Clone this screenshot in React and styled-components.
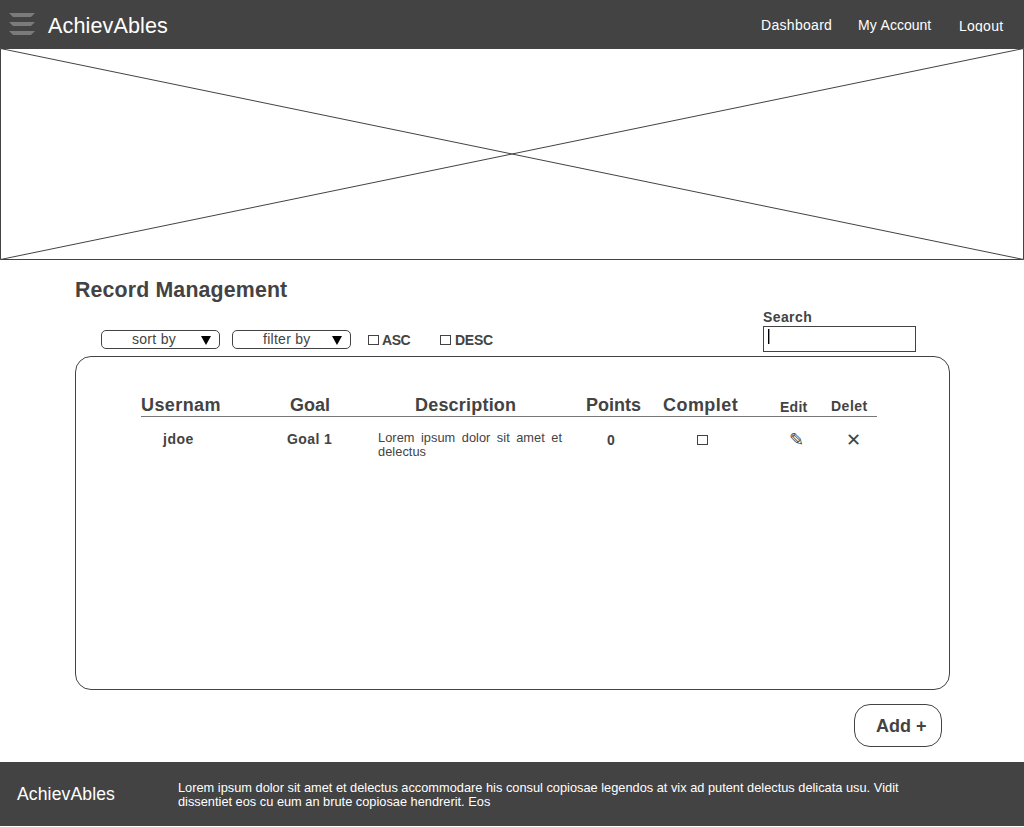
import React from "react";
import styled, { createGlobalStyle } from "styled-components";

const INK = "#434343";

const Global = createGlobalStyle`
  * { box-sizing: border-box; }
  body { margin: 0; background: #fff; overflow: hidden; }
`;

const Page = styled.div`
  width: 1024px;
  height: 827px;
  display: flex;
  flex-direction: column;
  background: #fff;
  color: ${INK};
  font-family: "Liberation Sans", Arial, sans-serif;
  font-kerning: none;
`;

const Label = styled.span`
  display: block;
  margin: 0;
  white-space: nowrap;
  font-size: ${(p) => p.$size || 14}px;
  font-weight: ${(p) => (p.$bold ? 700 : 400)};
  letter-spacing: ${(p) => p.$track || 0}px;
  line-height: ${(p) => p.$line || 16}px;
`;

const Header = styled.header`
  height: 48px;
  flex: none;
  display: flex;
  align-items: flex-start;
  background: ${INK};
  color: #fff;
  padding: 13px 0 0 9px;
`;

const MenuIcon = styled.svg`
  display: block;
  margin-right: 13px;
`;

const Nav = styled.nav`
  display: flex;
  align-items: flex-start;
  margin-left: auto;
  padding-top: 4px;
`;

const NavItem = styled(Label).attrs({ as: "a" })`
  width: ${(p) => p.$width}px;
  margin-top: ${(p) => p.$drop || 0}px;
  height: ${(p) => p.$height || 18}px;
  overflow: hidden;
`;

const Banner = styled.svg`
  display: block;
  flex: none;
`;

const Main = styled.main`
  flex: none;
  height: 502px;
  padding: 18px 74px 0 75px;
  display: flex;
  flex-direction: column;
`;

const Toolbar = styled.div`
  display: flex;
  flex: none;
  align-items: flex-start;
  height: 52px;
  margin-top: 2px;
  padding: 4px 34px 0 26px;
`;

const Select = styled.div`
  width: 119px;
  height: 19px;
  margin: 22px 12px 0 0;
  padding: 0 8px 0 30px;
  border: 1px solid ${INK};
  border-radius: 5px;
  display: flex;
  align-items: flex-start;
  justify-content: space-between;
`;

const Arrow = styled.svg`
  display: block;
  margin-top: 5px;
`;

const CheckOption = styled.label`
  display: flex;
  align-items: center;
  gap: ${(p) => p.$gap}px;
  width: ${(p) => p.$width}px;
  margin: 24px 0 0 ${(p) => p.$left || 0}px;
`;

const Box = styled.span`
  display: block;
  flex: none;
  width: 11px;
  height: 10px;
  border: 1px solid ${INK};
`;

const Search = styled.div`
  width: 153px;
  margin-left: auto;
  margin-top: 1px;
`;

const SearchField = styled.div`
  height: 26px;
  margin-top: 1px;
  border: 1px solid ${INK};
  padding: 2px 4px;
`;

const Caret = styled.span`
  display: block;
  width: 2px;
  height: 15px;
  background: linear-gradient(90deg, #000 50%, #999 50%);
`;

const Panel = styled.section`
  flex: none;
  height: 334px;
  width: 875px;
  border: 1px solid ${INK};
  border-radius: 16px;
  padding: 35px 72px 0 65px;
`;

const TableRow = styled.div`
  display: grid;
  grid-template-columns: 146px 91px 208px 77px 117px 51px 46px;
  height: ${(p) => (p.$head ? 25 : 50)}px;
  border-bottom: ${(p) => (p.$head ? "1px solid #777" : "0")};
  padding-top: ${(p) => (p.$head ? 3 : 13)}px;
`;

const Cell = styled.div`
  min-width: 0;
  padding-left: ${(p) => p.$left || 0}px;
  padding-top: ${(p) => p.$top || 0}px;
`;

const Description = styled.p`
  margin: 0;
  width: 184px;
  font-size: 12.8px;
  line-height: 14px;
  letter-spacing: 0.05px;
  text-align: justify;
`;

const Glyph = styled.span`
  display: block;
  font-family: "DejaVu Sans", sans-serif;
  font-size: ${(p) => p.$size}px;
  line-height: 19px;
`;

const AddButton = styled.button`
  align-self: flex-end;
  flex: none;
  width: 88px;
  height: 43px;
  margin: 14px 8px 0 0;
  padding: 0 0 0 21px;
  border: 1px solid ${INK};
  border-radius: 16px;
  background: #fff;
  color: inherit;
  font-family: inherit;
  text-align: left;
`;

const Footer = styled.footer`
  height: 64px;
  flex: none;
  display: flex;
  align-items: flex-start;
  background: ${INK};
  color: #fff;
  padding: 19px 0 0 17px;
`;

const FooterBrand = styled(Label)`
  width: 161px;
  padding-top: 3px;
`;

const Dropdown = ({ children }) => (
  <Select>
    <Label $track={0.28}>{children}</Label>
    <Arrow width="10" height="9" viewBox="0 0 10 9">
      <path d="M0 0H10L5 9Z" fill="#000" />
    </Arrow>
  </Select>
);

const heads = [
  { text: "Usernam", size: 18, track: 0.4 },
  { text: "Goal", size: 18, left: 3, track: 0 },
  { text: "Description", size: 18, left: 37, track: 0.2 },
  { text: "Points", size: 18, track: 0 },
  { text: "Complet", size: 18, track: 0.45 },
  { text: "Edit", track: 0.25, top: 2 },
  { text: "Delet", track: 0.5, top: 1 },
];

export default function App() {
  return (
    <Page>
      <Global />
      <Header>
        <MenuIcon width="26" height="22" viewBox="0 0 26 22">
          {[0, 9, 18].map((y) => (
            <path key={y} d={`M0 ${y}H26L22 ${y + 4}H4Z`} fill="#7b7b7b" />
          ))}
        </MenuIcon>
        <Label $size={21.6} $track={0.1} $line={25}>AchievAbles</Label>
        <Nav>
          <NavItem $width={97} $track={0.3}>Dashboard</NavItem>
          <NavItem $width={101}>My Account</NavItem>
          <NavItem $width={65} $track={0.25} $drop={1} $height={14}>Logout</NavItem>
        </Nav>
      </Header>
      <Banner width="1024" height="212" viewBox="0 0 1024 212">
        <path d="M.5 .5H1023.5V211.5H.5ZL1023.5 211.5M1023.5 .5L.5 211.5" fill="none" stroke={INK} />
      </Banner>
      <Main>
        <Label as="h1" $size={21.33} $bold $track={0.15} $line={24}>Record Management</Label>
        <Toolbar>
          <Dropdown>sort by</Dropdown>
          <Dropdown>filter by</Dropdown>
          <CheckOption $left={5} $width={72} $gap={3}>
            <Box />
            <Label $bold $track={-0.45}>ASC</Label>
          </CheckOption>
          <CheckOption $width={60} $gap={4}>
            <Box />
            <Label $bold $track={-0.25}>DESC</Label>
          </CheckOption>
          <Search>
            <Label $bold $track={0.4}>Search</Label>
            <SearchField>
              <Caret />
            </SearchField>
          </Search>
        </Toolbar>
        <Panel>
          <TableRow $head>
            {heads.map((h) => (
              <Cell key={h.text} $left={h.left} $top={h.top}>
                <Label $bold $size={h.size} $track={h.track} $line={20}>{h.text}</Label>
              </Cell>
            ))}
          </TableRow>
          <TableRow>
            <Cell $left={22} $top={1}><Label $bold $track={0.5}>jdoe</Label></Cell>
            <Cell $top={1}><Label $bold $track={0.4}>Goal 1</Label></Cell>
            <Cell $top={1}><Description>Lorem ipsum dolor sit amet et delectus</Description></Cell>
            <Cell $left={21} $top={2}><Label $bold>0</Label></Cell>
            <Cell $left={34} $top={5}><Box /></Cell>
            <Cell $left={9}><Glyph $size={18}>✎</Glyph></Cell>
            <Cell $left={15}><Glyph $size={18}>✕</Glyph></Cell>
          </TableRow>
        </Panel>
        <AddButton>
          <Label $size={18} $bold $line={20}>Add +</Label>
        </AddButton>
      </Main>
      <Footer>
        <FooterBrand $size={17.6} $track={0.1} $line={20}>AchievAbles</FooterBrand>
        <Label $size={12.8} $line={14}>
          Lorem ipsum dolor sit amet et delectus accommodare his consul copiosae legendos at vix ad putent delectus delicata usu. Vidit
          <br />
          dissentiet eos cu eum an brute copiosae hendrerit. Eos
        </Label>
      </Footer>
    </Page>
  );
}
